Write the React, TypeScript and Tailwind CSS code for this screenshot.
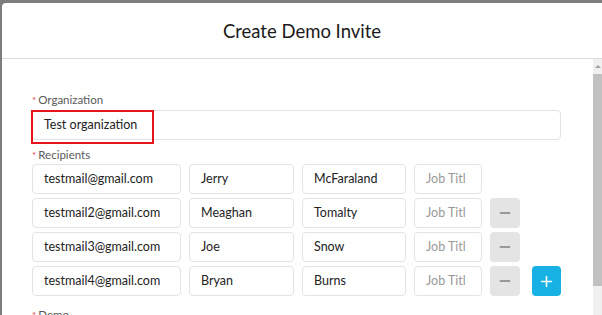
import { Minus, Plus } from "lucide-react";

const recipients = [
  { email: "testmail@gmail.com", first: "Jerry", last: "McFaraland", remove: false, add: false },
  { email: "testmail2@gmail.com", first: "Meaghan", last: "Tomalty", remove: true, add: false },
  { email: "testmail3@gmail.com", first: "Joe", last: "Snow", remove: true, add: false },
  { email: "testmail4@gmail.com", first: "Bryan", last: "Burns", remove: true, add: true },
];

function Field({ value, width, placeholder }: { value?: string; width: string; placeholder?: string }) {
  return (
    <div
      className={`${width} h-[30px] shrink-0 flex items-center px-[11px] border border-[#e3e3e3] rounded-[4px] bg-white text-[12.5px] whitespace-nowrap overflow-hidden ${
        value ? "text-[#222]" : "text-[#999]"
      }`}
    >
      {value ?? placeholder}
    </div>
  );
}

function Label({ text }: { text: string }) {
  return (
    <div className="flex items-center h-[16px] text-[11.5px] text-[#595959]">
      <span className="text-[#e0474c] mr-[2px] text-[10px]">*</span>
      {text}
    </div>
  );
}

export default function App() {
  return (
    <div
      className="w-[602px] h-[315px] overflow-hidden bg-[#7d7d7d] pt-[3px] pl-[2px]"
      style={{ fontFamily: 'Lato, "Noto Sans", sans-serif' }}
    >
      <div className="w-[600px] h-[312px] bg-white rounded-tl-[4px] flex flex-col">
        {/* Header */}
        <div className="h-[56px] shrink-0 flex items-center justify-center pt-[3px] border-b border-[#dadada] text-[18.5px] text-[#1a1a1a]">
          Create Demo Invite
        </div>

        <div className="flex flex-1 min-h-0">
          {/* Body */}
          <div className="w-[591px] shrink-0 pl-[30px] pr-[32px] pt-[33px]">
            <Label text="Organization" />
            <div className="relative mt-[2px]">
              <Field value="Test organization" width="w-full" />
              <div className="absolute left-[-1px] top-0 w-[123px] h-[34px] border-2 border-[#e8141c]" />
            </div>

            <div className="mt-[7px]">
              <Label text="Recipients" />
            </div>
            <div className="mt-[1px] flex flex-col gap-[4px]">
              {recipients.map((r) => (
                <div key={r.email} className="flex items-center gap-[8px]">
                  <Field value={r.email} width="w-[149px]" />
                  <Field value={r.first} width="w-[105px]" />
                  <Field value={r.last} width="w-[104px]" />
                  <Field placeholder="Job Titl" width="w-[68px]" />
                  {r.remove && (
                    <button className="w-[30px] h-[30px] rounded-[4px] bg-[#e4e4e4] flex items-center justify-center text-[#808080]">
                      <Minus size={16} strokeWidth={2} />
                    </button>
                  )}
                  {r.add && (
                    <button className="ml-[4px] w-[29px] h-[30px] rounded-[4px] bg-[#17b1e3] flex items-center justify-center text-white">
                      <Plus size={17} strokeWidth={2.2} />
                    </button>
                  )}
                </div>
              ))}
            </div>

            <div className="mt-[11px]">
              <Label text="Demo" />
            </div>
          </div>

          {/* Scrollbar */}
          <div className="w-[9px] shrink-0 bg-[#f0f0f0] flex flex-col items-center pt-[6px]">
            <div className="w-0 h-0 border-l-[3px] border-r-[3px] border-b-[3px] border-l-transparent border-r-transparent border-b-[#a3a3a3]" />
            <div className="mt-[6px] w-[9px] h-[212px] bg-[#c1c1c1]" />
          </div>
        </div>
      </div>
    </div>
  );
}
